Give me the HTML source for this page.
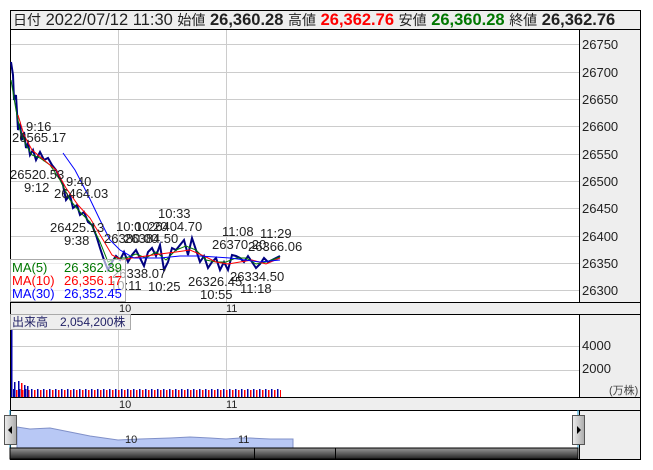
<!DOCTYPE html>
<html><head><meta charset="utf-8"><style>
*{margin:0;padding:0;box-sizing:border-box}
body{width:653px;height:470px;background:#fff;position:relative;overflow:hidden;font-family:"Liberation Sans","Noto Sans CJK JP",sans-serif}
.abs{position:absolute}
.hdr{left:10px;top:10px;width:631px;height:20px;border:1px solid #000;background:#eee;font-size:16.5px;line-height:18px;padding-left:2px;white-space:nowrap;color:#222}
.hdr small{font-size:14px}
.hdr b{font-weight:bold}
</style></head><body>
<div class="abs hdr"><small>日付</small> 2022/07/12 11:30 <small>始値</small> <b>26,360.28</b> <small>高値</small> <b style="color:#f00">26,362.76</b> <small>安値</small> <b style="color:#070">26,360.28</b> <small>終値</small> <b>26,362.76</b></div>
<svg class="abs" style="left:0;top:0" width="653" height="470" font-family="Liberation Sans, Noto Sans CJK JP, sans-serif">
<rect x="10.5" y="29.5" width="630" height="430" fill="none" stroke="#000"/>
<rect x="579" y="30" width="61" height="272" fill="#eee"/>
<line x1="579.5" y1="30" x2="579.5" y2="302" stroke="#000"/>
<rect x="11" y="302" width="629" height="12" fill="#eee"/>
<line x1="10" y1="302.5" x2="640" y2="302.5" stroke="#000"/>
<line x1="10" y1="314.5" x2="640" y2="314.5" stroke="#000"/>
<rect x="579" y="315" width="61" height="82" fill="#eee"/>
<line x1="579.5" y1="314" x2="579.5" y2="397" stroke="#000"/>
<rect x="11" y="397" width="629" height="13" fill="#eee"/>
<line x1="10" y1="397.5" x2="640" y2="397.5" stroke="#000"/>
<line x1="10" y1="410.5" x2="640" y2="410.5" stroke="#000"/>
<rect x="579" y="411" width="61" height="48" fill="#eee"/>
<line x1="579.5" y1="410" x2="579.5" y2="459" stroke="#000"/>
<g stroke="#ccc">
<line x1="11" y1="44.5" x2="579" y2="44.5"/><line x1="11" y1="72.5" x2="579" y2="72.5"/><line x1="11" y1="99.5" x2="579" y2="99.5"/><line x1="11" y1="126.5" x2="579" y2="126.5"/><line x1="11" y1="154.5" x2="579" y2="154.5"/><line x1="11" y1="181.5" x2="579" y2="181.5"/><line x1="11" y1="208.5" x2="579" y2="208.5"/><line x1="11" y1="236.5" x2="579" y2="236.5"/><line x1="11" y1="263.5" x2="579" y2="263.5"/><line x1="11" y1="290.5" x2="579" y2="290.5"/>
<line x1="118.5" y1="30" x2="118.5" y2="302"/><line x1="226.5" y1="30" x2="226.5" y2="302"/>
<line x1="11" y1="346.5" x2="579" y2="346.5"/><line x1="11" y1="370.5" x2="579" y2="370.5"/>
<line x1="118.5" y1="315" x2="118.5" y2="397"/><line x1="226.5" y1="315" x2="226.5" y2="397"/>
</g>
<g font-size="13" fill="#222">
<text x="582" y="49">26750</text><text x="582" y="77">26700</text><text x="582" y="104">26650</text><text x="582" y="131">26600</text><text x="582" y="159">26550</text><text x="582" y="186">26500</text><text x="582" y="213">26450</text><text x="582" y="241">26400</text><text x="582" y="268">26350</text><text x="582" y="295">26300</text>
<text x="582" y="350">4000</text><text x="582" y="373">2000</text>
<text x="609" y="394" font-size="11" fill="#444">(万株)</text>
<text x="119" y="312" font-size="11">10</text><text x="226" y="312" font-size="11">11</text>
<text x="119" y="408" font-size="11">10</text><text x="226" y="408" font-size="11">11</text>
</g>
<polyline fill="none" stroke="#000080" stroke-width="2" points="11,62 13,75 14,100 16,95 18,130 20,125 22,140 24,132 26,148 28,143 30,155 33,150 36,160 40,152 44,160 48,158 52,165 56,170 60,178 63,185 66,200 70,195 73,208 77,205 80,215 84,212 88,222 92,225 96,235 100,248 104,260 108,270 112,262 116,256 120,260 124,252 128,262 132,255 136,250 140,258 144,266 148,252 152,248 156,256 160,245 164,270 168,262 172,248 176,250 180,245 184,240 188,255 192,238 196,250 200,262 204,256 208,268 212,262 216,258 220,270 224,262 228,270 232,255 236,256 240,258 244,262 248,256 252,262 256,268 260,264 264,258 268,262 272,260 276,258 280,256"/>
<polyline fill="none" stroke="#070" stroke-width="1" points="11,80 16,110 20,130 26,145 32,155 40,158 50,165 60,180 70,200 80,212 90,222 100,242 108,262 116,258 126,258 136,254 146,258 156,252 166,260 176,250 186,246 196,250 206,260 216,262 226,262 236,258 246,258 256,264 266,262 280,257"/>
<polyline fill="none" stroke="#f00" stroke-width="1" points="18,115 24,135 32,150 44,160 56,170 66,188 78,205 90,218 102,238 112,255 122,260 132,258 146,256 160,254 176,252 190,250 204,256 216,262 228,264 240,262 252,260 266,264 280,258"/>
<polyline fill="none" stroke="#00f" stroke-width="1" points="63,153 75,170 88,195 100,220 110,240 120,250 134,258 160,258 180,256 200,256 230,258 260,262 280,260"/>
<g font-size="13" fill="#222">
<text x="26" y="131">9:16</text><text x="12" y="142">26565.17</text>
<text x="10" y="179">26520.53</text><text x="24" y="192">9:12</text>
<text x="66" y="186">9:40</text><text x="54" y="198">26464.03</text>
<text x="50" y="232">26425.13</text><text x="64" y="245">9:38</text>
<text x="116" y="231">10:0</text><text x="104" y="243">26380.00</text>
<text x="135" y="231">10:20</text><text x="124" y="243">26384.50</text>
<text x="158" y="218">10:33</text><text x="148" y="231">26404.70</text>
<text x="112" y="278">26338.07</text><text x="110" y="290">10:11</text><text x="148" y="291">10:25</text>
<text x="222" y="236">11:08</text><text x="212" y="249">26370.20</text>
<text x="260" y="238">11:29</text><text x="248" y="251">26366.06</text>
<text x="188" y="286">26326.45</text><text x="200" y="299">10:55</text>
<text x="230" y="281">26334.50</text><text x="240" y="293">11:18</text>
</g>
<rect x="10.5" y="259.5" width="115" height="42" fill="#fff" fill-opacity="0.6" stroke="#aaa"/>
<g font-size="13">
<text x="12" y="272" fill="#070">MA(5)</text><text x="64" y="272" fill="#070">26,362.39</text>
<text x="12" y="285" fill="#f00">MA(10)</text><text x="64" y="285" fill="#f00">26,356.17</text>
<text x="12" y="298" fill="#00f">MA(30)</text><text x="64" y="298" fill="#00f">26,352.45</text>
</g>
<rect x="10.5" y="314.5" width="120" height="15" fill="#eee" stroke="#aaa"/>
<text x="12" y="326" font-size="12" fill="#226">出来高　2,054,200株</text>
<defs><pattern id="vb" x="13" y="380" width="6" height="17" patternUnits="userSpaceOnUse"><rect x="0" y="9" width="1.5" height="8" fill="#00a"/><rect x="3" y="10" width="1.5" height="7" fill="#f00"/></pattern></defs>
<rect x="11" y="330" width="1.5" height="67" fill="#00a"/>
<rect x="13" y="380" width="268" height="17" fill="url(#vb)"/>
<rect x="14" y="382" width="1.5" height="15" fill="#00a"/><rect x="18" y="381" width="1.5" height="16" fill="#00a"/><rect x="21" y="383" width="1.5" height="14" fill="#f00"/><rect x="24" y="385" width="1.5" height="12" fill="#00a"/><rect x="27" y="386" width="1.5" height="11" fill="#00a"/>
<polygon fill="#b8c8f5" stroke="#8090c8" points="17,427 30,429 50,428 70,432 90,436 118,440 140,439 170,438 190,437 210,438 226,439 240,438 250,438 270,439 293,439 293,448 17,448"/>
<line x1="10" y1="410" x2="10" y2="448" stroke="#29c"/><line x1="578" y1="410" x2="578" y2="448" stroke="#29c"/>
<text x="125" y="443" font-size="11" fill="#222">10</text><text x="238" y="443" font-size="11" fill="#222">11</text>
<defs><linearGradient id="sb" x1="0" y1="0" x2="0" y2="1"><stop offset="0" stop-color="#999"/><stop offset="1" stop-color="#222"/></linearGradient>
<linearGradient id="bt" x1="0" y1="0" x2="1" y2="0"><stop offset="0" stop-color="#eee"/><stop offset="1" stop-color="#aaa"/></linearGradient></defs>
<rect x="10" y="448" width="568" height="11" fill="url(#sb)" stroke="#000"/>
<line x1="254.5" y1="448" x2="254.5" y2="459" stroke="#000"/><line x1="335.5" y1="448" x2="335.5" y2="459" stroke="#000"/>
<rect x="4.5" y="415.5" width="12" height="29" fill="url(#bt)" stroke="#555"/>
<polygon points="8,430 12,426 12,434" fill="#000"/>
<rect x="572.5" y="415.5" width="12" height="29" fill="url(#bt)" stroke="#555"/>
<polygon points="581,430 577,426 577,434" fill="#000"/>
</svg>
</body></html>
